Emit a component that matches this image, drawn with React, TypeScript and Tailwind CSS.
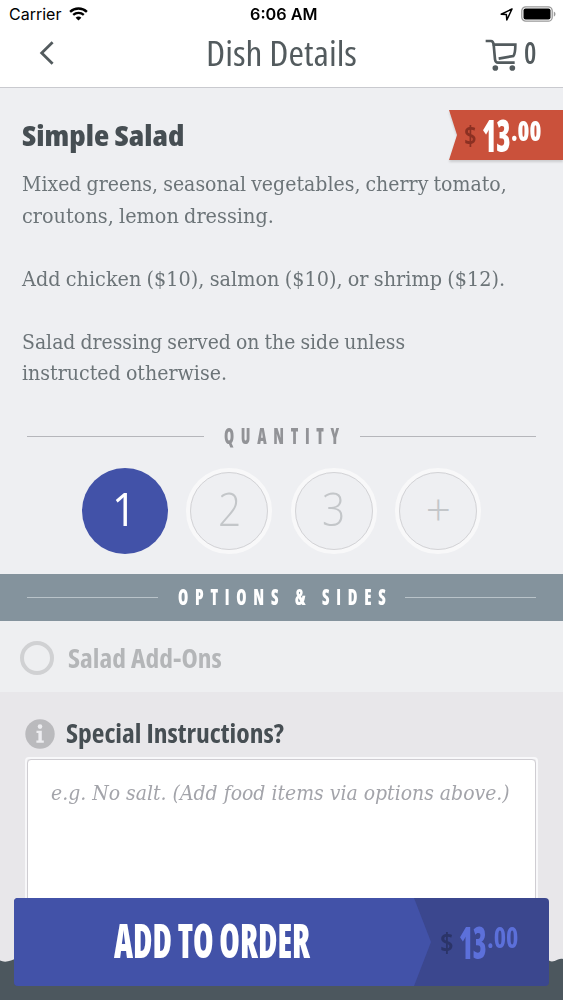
import * as React from "react";
import clsx from "clsx";

interface FitTextProps {
    children: string;
    className?: string;
    textClassName?: string;
}

// Squeezes a single line of text horizontally so it fills its box.
function FitText({ children, className, textClassName }: FitTextProps) {
    const boxRef = React.useRef<HTMLSpanElement>(null);
    const textRef = React.useRef<HTMLSpanElement>(null);
    const [scale, setScale] = React.useState(1);

    React.useLayoutEffect(() => {
        if (boxRef.current && textRef.current) {
            setScale(boxRef.current.clientWidth / textRef.current.offsetWidth);
        }
    }, [children]);

    return (
        <span ref={boxRef} className={clsx("flex shrink-0 items-center", className)}>
            <span
                ref={textRef}
                className={clsx("block shrink-0 origin-left whitespace-nowrap", textClassName)}
                style={{ transform: `scaleX(${scale})` }}
            >
                {children}
            </span>
        </span>
    );
}

function StatusBar() {
    return (
        <div className="flex h-7 items-center justify-between pl-[9px] pr-[7px] font-['Inter','Liberation_Sans',sans-serif] text-black">
            <div className="flex w-[200px] items-center gap-2">
                <FitText className="w-[52px] leading-5" textClassName="text-[16px]">Carrier</FitText>
                <svg className="h-[14px] w-[19px]" viewBox="0 0 19 14" fill="none" stroke="black">
                    <path d="M1.1 4.8C5.8.3 13.2.3 17.9 4.8" strokeWidth="2.4" />
                    <path d="M4.2 7.9c3-2.8 7.6-2.8 10.6 0" strokeWidth="2.3" />
                    <path d="M9.5 13.6 6.6 10.7c1.6-1.5 4.2-1.5 5.8 0z" fill="black" stroke="none" />
                </svg>
            </div>
            <FitText className="ml-[3px] w-[68px] leading-5" textClassName="text-[16px] font-semibold">6:06 AM</FitText>
            <div className="flex w-[200px] items-center justify-end gap-[8px]">
                <svg className="h-[13px] w-[13px]" viewBox="0 0 13 13" fill="none" stroke="black" strokeWidth="1.5">
                    <path d="M12 1 1.2 6.2l5.2.4.4 5.4z" strokeLinejoin="round" />
                </svg>
                <svg className="h-4 w-[35px]" viewBox="0 0 35 16">
                    <rect x=".8" y=".8" width="30.4" height="14.4" rx="4" fill="none" stroke="#999" strokeWidth="1.3" />
                    <rect x="2.5" y="2.5" width="27" height="11" rx="2" />
                    <path d="M32.8 5.4c2.2 1 2.2 4.2 0 5.2z" fill="#999" />
                </svg>
            </div>
        </div>
    );
}

function Header() {
    return (
        <header className="h-[88px] border-b border-[#c9cacf] bg-white">
            <StatusBar />
            <div className="flex h-[50px] items-center justify-between pl-[39px] pr-[27px] text-[#535b5e]">
                <svg className="h-6 w-[130px]" viewBox="0 0 130 24" fill="none" stroke="currentColor" strokeWidth="2.8">
                    <path d="M13.6 1.2 2.7 12l10.9 10.8" />
                </svg>
                <FitText className="-ml-[13px] w-[151px] leading-[48px]" textClassName="text-[35px] font-stretch-condensed font-normal">
                    Dish Details
                </FitText>
                <div className="flex w-[130px] items-center justify-end gap-[4px]">
                    <svg className="mt-1 h-[34px] w-[36px]" viewBox="0 0 108 102" fill="none" stroke="currentColor" strokeWidth="8">
                        <path d="M5 9h16c5 0 7 3 8 11l4 44c1 7 3 10 9 10h50" />
                        <path d="M26 20h68c0 20-2 29-6 34l-44 8" />
                        <circle cx="34" cy="90" r="8.5" fill="currentColor" stroke="none" />
                        <circle cx="85" cy="90" r="8.5" fill="currentColor" stroke="none" />
                    </svg>
                    <FitText className="w-[12px] leading-[36px]" textClassName="text-[30px] font-stretch-condensed font-semibold">0</FitText>
                </div>
            </div>
        </header>
    );
}

function PriceRibbon() {
    return (
        <div className="drop-shadow-[0_2px_1px_rgba(0,0,0,0.14)]">
            <div className="flex h-[50px] w-[114px] items-center bg-[#ca513b] pl-[15px] font-stretch-condensed text-white [clip-path:polygon(0_0,100%_0,100%_100%,0_100%,8px_50%)]">
                <FitText className="w-[13px] leading-[30px]" textClassName="text-[27px] font-bold text-[#8b3022]">$</FitText>
                <FitText className="ml-[5px] w-[29px] leading-[48px]" textClassName="text-[44px] font-extrabold">13</FitText>
                <FitText className="-mt-[11px] w-[30px] leading-[28px]" textClassName="text-[28px] font-extrabold">.00</FitText>
            </div>
        </div>
    );
}

const description = [
    { text: "Mixed greens, seasonal vegetables, cherry tomato,", width: "w-[485px]" },
    { text: "croutons, lemon dressing.", width: "w-[252px]" },
    null,
    { text: "Add chicken ($10), salmon ($10), or shrimp ($12).", width: "w-[483px]" },
    null,
    { text: "Salad dressing served on the side unless", width: "w-[383px]" },
    { text: "instructed otherwise.", width: "w-[205px]" },
];

function Description() {
    return (
        <div className="mt-[9px] pl-[22px] font-['DejaVu_Serif',serif] text-[20.5px] leading-[31.5px] text-[#6c7478] [word-spacing:-1px]">
            {description.map((line, i) =>
                line ? (
                    <FitText key={i} className={clsx("h-[31.5px]", line.width)}>{line.text}</FitText>
                ) : (
                    <div key={i} className="h-[31.5px]" />
                )
            )}
        </div>
    );
}

const quantities = ["1", "2", "3", "+"];

function QuantityPicker() {
    const [selected, setSelected] = React.useState("1");

    return (
        <div className="mt-[19px] flex justify-center gap-[18.5px]">
            {quantities.map((q) => (
                <button
                    key={q}
                    onClick={() => setSelected(q)}
                    className={clsx(
                        "flex size-[86px] items-center justify-center rounded-full",
                        q === selected ? "bg-[#4252a8] text-white" : "border-4 border-[#f8f8f9] text-[#c3c6c9]"
                    )}
                >
                    <span
                        className={clsx(
                            "flex size-[78px] shrink-0 items-center justify-center rounded-full border text-[46px] leading-none",
                            q === selected ? "border-transparent font-medium" : "border-[#d3d3d6] font-light"
                        )}
                    >
                        {q === "+" ? (
                            <span className="-mt-1 text-[44px]">+</span>
                        ) : (
                            <FitText className={clsx("-mt-[5px]", q === "1" ? "-ml-[2px] w-[24px]" : "w-[23px]")}>{q}</FitText>
                        )}
                    </span>
                </button>
            ))}
        </div>
    );
}

function OptionsHeading() {
    return (
        <div className="flex h-[47px] items-center bg-[#84939d] px-[27px]">
            <div className="h-px w-[131px] bg-[#b9c3c9]" />
            <FitText className="-mt-[3px] ml-5 w-[215px] leading-6" textClassName="text-[22px] font-stretch-condensed font-extrabold tracking-[9px] text-white">
                OPTIONS &amp; SIDES
            </FitText>
            <div className="ml-auto h-px w-[131px] bg-[#b9c3c9]" />
        </div>
    );
}

function SpecialInstructions() {
    return (
        <div className="h-[308px] bg-[#e8e7ea] px-[25px] pt-[26px]">
            <div className="flex h-[31px] items-center gap-[12px]">
                <svg className="size-[30px]" viewBox="0 0 30 30">
                    <circle cx="15" cy="15" r="14.7" fill="#bababd" />
                    <circle cx="15" cy="7.6" r="2.3" fill="#ededf0" />
                    <path d="M11.5 11.7h5.3v9.8h2v2.3h-7.4v-2.3h2v-7.4h-1.9z" fill="#ededf0" />
                </svg>
                <FitText className="-mt-px -ml-px w-[218px] leading-[31px]" textClassName="text-[26px] font-stretch-condensed font-bold text-[#464e53]">
                    Special Instructions?
                </FitText>
            </div>
            <div className="mt-[8px] h-[243px] w-[513px] rounded-[4px] border-2 border-[#f8f8fa]">
                <div className="h-full rounded-[4px] border border-[#cfcdd2] bg-white pl-[23px] pt-[17px]">
                    <FitText
                        className="w-[459px] leading-[32px]"
                        textClassName="font-['DejaVu_Serif',serif] text-[20.5px] italic text-[#a3a4aa]"
                    >
                        e.g. No salt. (Add food items via options above.)
                    </FitText>
                </div>
            </div>
        </div>
    );
}

function OrderBar() {
    return (
        <div className="absolute inset-x-0 bottom-0 h-[102px]">
            <svg className="absolute bottom-0 left-0 h-[43px] w-[563px]" viewBox="0 0 563 43" fill="#4c575e">
                <path d="M0 3.5c3 1.500 7 1.500 11 0l5-2H547c3 4 6 3.500 11 1 2-.9 4-.9 5-.4V43H0z" />
            </svg>
            <button className="relative ml-[14px] flex h-[88px] w-[535px] items-center overflow-hidden rounded-[4px] bg-[#3b478e] text-left font-stretch-condensed">
                <span className="flex h-full w-[417px] items-center bg-[#4252a8] pl-[100px] [clip-path:polygon(0_0,400px_0,417px_50%,400px_100%,0_100%)]">
                    <FitText className="-mt-[4px] w-[196px] leading-[50px]" textClassName="text-[48px] font-extrabold text-white">
                        ADD TO ORDER
                    </FitText>
                </span>
                <FitText className="ml-[9px] w-[14px] leading-[30px]" textClassName="text-[27px] font-bold text-[#2b3468]">$</FitText>
                <FitText className="ml-[5px] w-[28px] leading-[48px]" textClassName="text-[44px] font-extrabold text-[#5c70da]">13</FitText>
                <FitText className="-mt-[11px] w-[31px] leading-[28px]" textClassName="text-[28px] font-bold text-[#5c70da]">.00</FitText>
            </button>
        </div>
    );
}

export default function App() {
    return (
        <div className="relative h-[1000px] w-[563px] overflow-hidden bg-[#eeeff2] font-['Open_Sans','Noto_Sans',sans-serif]">
            <Header />
            <section className="h-[486px] pt-[22px]">
                <div className="flex h-[50px] items-center justify-between pl-[22px]">
                    <FitText className="-mt-px w-[162px] leading-[40px]" textClassName="text-[29px] font-stretch-condensed font-extrabold text-[#464e53]">
                        Simple Salad
                    </FitText>
                    <PriceRibbon />
                </div>
                <Description />
                <div className="mt-[35px] flex h-6 items-center px-[27px]">
                    <div className="h-px w-[177px] bg-[#b5b6bb]" />
                    <FitText className="-mt-[4px] ml-5 w-[122px] leading-6" textClassName="text-[22px] font-stretch-condensed font-extrabold tracking-[9px] text-[#929397]">
                        QUANTITY
                    </FitText>
                    <div className="ml-auto h-px w-[176px] bg-[#b5b6bb]" />
                </div>
                <QuantityPicker />
            </section>
            <OptionsHeading />
            <div className="flex h-[71px] items-center gap-[14px] bg-[#eeeff1] pl-[20px]">
                <span className="mt-[2px] size-[34px] rounded-full border-4 border-[#d0d1d3]" />
                <FitText className="mt-[3px] w-[154px] leading-[36px]" textClassName="text-[27px] font-stretch-condensed font-bold text-[#b4b6b8]">
                    Salad Add-Ons
                </FitText>
            </div>
            <SpecialInstructions />
            <OrderBar />
        </div>
    );
}
